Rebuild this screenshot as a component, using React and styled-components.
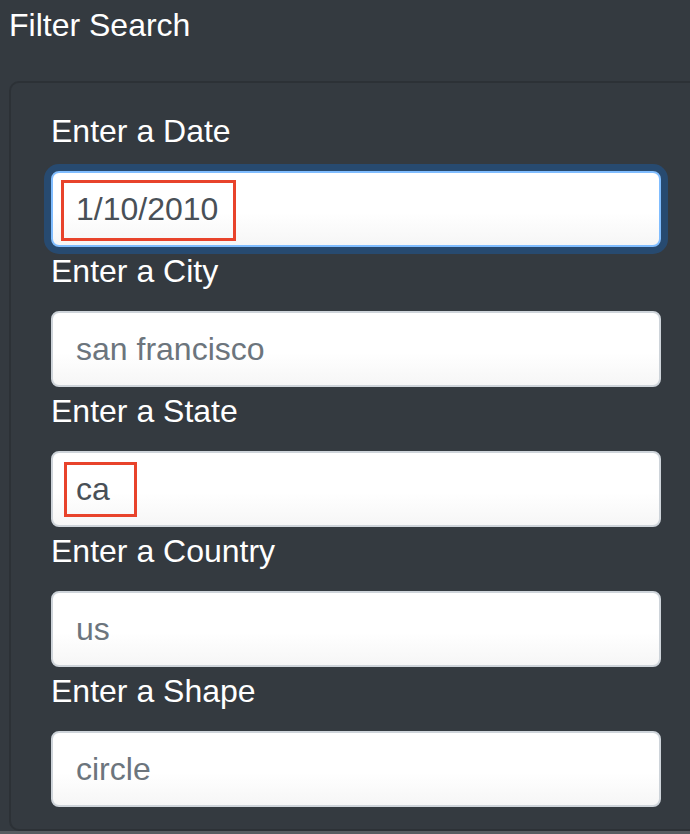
import React, { useState } from 'react';
import styled, { createGlobalStyle } from 'styled-components';

const GlobalStyle = createGlobalStyle`
    html, body {
        margin: 0;
        padding: 0;
        background-color: #343a40;
    }
    body {
        font-family: "Liberation Sans", Arial, sans-serif;
    }
`;

const Page = styled.div`
    width: 690px;
    height: 834px;
    overflow: hidden;
    background-color: #343a40;
    display: flex;
    flex-direction: column;
`;

const Title = styled.h1`
    margin: 0 0 31px 9px;
    font-size: 32px;
    font-weight: 400;
    line-height: 50px;
    color: #ffffff;
`;

const Panel = styled.form`
    margin-left: 9px;
    width: 720px;
    box-sizing: border-box;
    border: 2px solid #2c3136;
    border-radius: 10px;
    padding: 24px 40px 22px;
    display: flex;
    flex-direction: column;
`;

const Group = styled.div`
    display: flex;
    flex-direction: column;
`;

const Label = styled.label`
    font-size: 32px;
    line-height: 48px;
    color: #ffffff;
    margin-bottom: 16px;
`;

const Field = styled.div`
    position: relative;
    width: 610px;
`;

const Input = styled.input`
    box-sizing: border-box;
    width: 100%;
    height: 76px;
    padding: 0 23px;
    font-family: inherit;
    font-size: 32px;
    color: #495057;
    border: 2px solid ${({ $focused }) => ($focused ? '#80bdff' : '#ced4da')};
    border-radius: 8px;
    background: linear-gradient(#ffffff 55%, #f6f6f6);
    box-shadow: ${({ $focused }) => ($focused ? '0 0 0 7px rgba(0, 123, 255, 0.25)' : 'none')};
    outline: none;

    &::placeholder {
        color: #6c757d;
    }
`;

const Mark = styled.span`
    position: absolute;
    left: ${({ $left }) => $left}px;
    top: ${({ $top }) => $top}px;
    width: ${({ $w }) => $w}px;
    height: ${({ $h }) => $h}px;
    border: 3px solid #e8432b;
    box-sizing: border-box;
    pointer-events: none;
`;

const Strip = styled.div`
    height: 4px;
    margin-top: auto;
    background-color: #575c61;
`;

const fields = [
    { name: 'date', label: 'Enter a Date', value: '1/10/2010', focused: true, mark: { left: 10, top: 9, w: 175, h: 61 } },
    { name: 'city', label: 'Enter a City', placeholder: 'san francisco' },
    { name: 'state', label: 'Enter a State', value: 'ca', mark: { left: 13, top: 11, w: 73, h: 55 } },
    { name: 'country', label: 'Enter a Country', placeholder: 'us' },
    { name: 'shape', label: 'Enter a Shape', placeholder: 'circle' },
];

export default function App() {
    // Store form data
    const [values, setValues] = useState(
        Object.fromEntries(fields.map((f) => [f.name, f.value || '']))
    );

    function handleChange(e) {
        const { name, value } = e.target;
        setValues({ ...values, [name]: value });
    }

    return (
        <Page>
            <GlobalStyle />
            <Title>Filter Search</Title>
            <Panel onSubmit={(e) => e.preventDefault()}>
                {fields.map((f) => (
                    <Group key={f.name}>
                        <Label htmlFor={f.name}>{f.label}</Label>
                        <Field>
                            <Input
                                id={f.name}
                                name={f.name}
                                type="text"
                                value={values[f.name]}
                                placeholder={f.placeholder}
                                onChange={handleChange}
                                $focused={f.focused}
                            />
                            {f.mark && <Mark $left={f.mark.left} $top={f.mark.top} $w={f.mark.w} $h={f.mark.h} />}
                        </Field>
                    </Group>
                ))}
            </Panel>
            <Strip />
        </Page>
    );
}
